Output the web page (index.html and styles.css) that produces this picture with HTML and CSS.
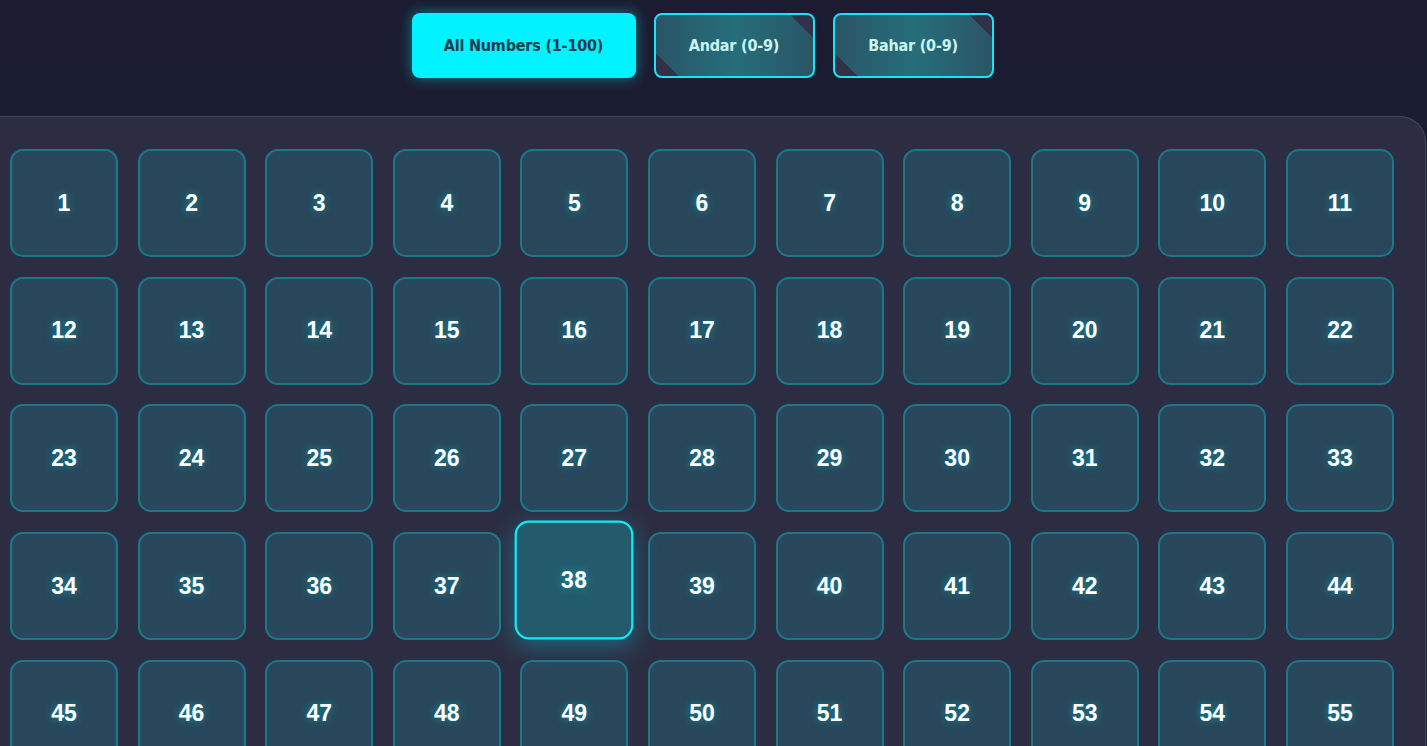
FILE: index.html
```html
<!DOCTYPE html>
<html lang="en">
<head>
<meta charset="utf-8">
<title>Numbers</title>
<link rel="stylesheet" href="styles.css">
</head>
<body>
<div class="page">
  <div class="tabs">
    <button class="tab tab-active">All Numbers (1-100)</button>
    <button class="tab tab-outline">Andar (0-9)</button>
    <button class="tab tab-outline">Bahar (0-9)</button>
  </div>
  <div class="panel">
    <div class="grid" id="grid">
      <div class="cell"><span>1</span></div>
      <div class="cell"><span>2</span></div>
      <div class="cell"><span>3</span></div>
      <div class="cell"><span>4</span></div>
      <div class="cell"><span>5</span></div>
      <div class="cell"><span>6</span></div>
      <div class="cell"><span>7</span></div>
      <div class="cell"><span>8</span></div>
      <div class="cell"><span>9</span></div>
      <div class="cell"><span>10</span></div>
      <div class="cell"><span>11</span></div>
      <div class="cell"><span>12</span></div>
      <div class="cell"><span>13</span></div>
      <div class="cell"><span>14</span></div>
      <div class="cell"><span>15</span></div>
      <div class="cell"><span>16</span></div>
      <div class="cell"><span>17</span></div>
      <div class="cell"><span>18</span></div>
      <div class="cell"><span>19</span></div>
      <div class="cell"><span>20</span></div>
      <div class="cell"><span>21</span></div>
      <div class="cell"><span>22</span></div>
      <div class="cell"><span>23</span></div>
      <div class="cell"><span>24</span></div>
      <div class="cell"><span>25</span></div>
      <div class="cell"><span>26</span></div>
      <div class="cell"><span>27</span></div>
      <div class="cell"><span>28</span></div>
      <div class="cell"><span>29</span></div>
      <div class="cell"><span>30</span></div>
      <div class="cell"><span>31</span></div>
      <div class="cell"><span>32</span></div>
      <div class="cell"><span>33</span></div>
      <div class="cell"><span>34</span></div>
      <div class="cell"><span>35</span></div>
      <div class="cell"><span>36</span></div>
      <div class="cell"><span>37</span></div>
      <div class="cell cell-selected"><span>38</span></div>
      <div class="cell"><span>39</span></div>
      <div class="cell"><span>40</span></div>
      <div class="cell"><span>41</span></div>
      <div class="cell"><span>42</span></div>
      <div class="cell"><span>43</span></div>
      <div class="cell"><span>44</span></div>
      <div class="cell"><span>45</span></div>
      <div class="cell"><span>46</span></div>
      <div class="cell"><span>47</span></div>
      <div class="cell"><span>48</span></div>
      <div class="cell"><span>49</span></div>
      <div class="cell"><span>50</span></div>
      <div class="cell"><span>51</span></div>
      <div class="cell"><span>52</span></div>
      <div class="cell"><span>53</span></div>
      <div class="cell"><span>54</span></div>
      <div class="cell"><span>55</span></div>
    </div>
  </div>
</div>
</body>
</html>
```

FILE: styles.css
```css
* { box-sizing: border-box; }
html, body {
  margin: 0;
  padding: 0;
  height: 100%;
  overflow: hidden;
}
body {
  background: linear-gradient(180deg, #1b1c31 0%, #1a1c33 100%);
  font-family: "Liberation Sans", Arial, sans-serif;
}
.page {
  display: flex;
  flex-direction: column;
}
.tabs {
  display: flex;
  justify-content: center;
  gap: 18px;
  padding: 13px 22px 0 0;
  height: 116px;
}
.tab {
  height: 65px;
  border-radius: 8px;
  font-family: "DejaVu Sans Condensed", "DejaVu Sans", sans-serif;
  font-weight: bold;
  font-size: 16px;
  letter-spacing: -0.2px;
  cursor: pointer;
  position: relative;
  overflow: hidden;
}
.tab-active {
  width: 224px;
  background: #00f3ff;
  border: none;
  color: #1e3a4b;
  box-shadow: 0 0 14px rgba(0, 243, 255, 0.45);
}
.tab-outline {
  width: 161px;
  border: 2px solid #14e6f5;
  color: #c9f7f3;
  background:
    linear-gradient(225deg, #33304a 0 16px, transparent 16px),
    linear-gradient(45deg, #33304a 0 16px, transparent 16px),
    linear-gradient(90deg, #2a5566 0%, #266e7a 50%, #2a5566 100%);
}
.panel {
  background: #2c2d43;
  border-top: 1px solid #44465e;
  border-right: 1px solid #44465e;
  border-top-right-radius: 26px;
  padding: 32px 32px 0 10px;
  height: 640px;
  margin-right: 1px;
}
.grid {
  display: grid;
  grid-template-columns: repeat(11, 108px);
  grid-auto-rows: 108px;
  column-gap: 19.6px;
  row-gap: 19.7px;
}
.cell {
  border: 2px solid #1c7888;
  border-radius: 13px;
  background: #28475a;
  display: flex;
  align-items: center;
  justify-content: center;
  color: #ffffff;
  font-weight: bold;
  font-size: 23px;
}
.cell span {
  text-shadow: 0 0 8px rgba(0, 210, 235, 0.55);
}
.cell-selected {
  background: #245b6c;
  border-color: #10eaf7;
  transform: translateY(-6px) scale(1.1);
  box-shadow: 0 6px 22px rgba(0, 220, 240, 0.35);
  font-family: Roboto, "Liberation Sans", sans-serif;
  font-size: 21px;
  position: relative;
  z-index: 1;
}
```
